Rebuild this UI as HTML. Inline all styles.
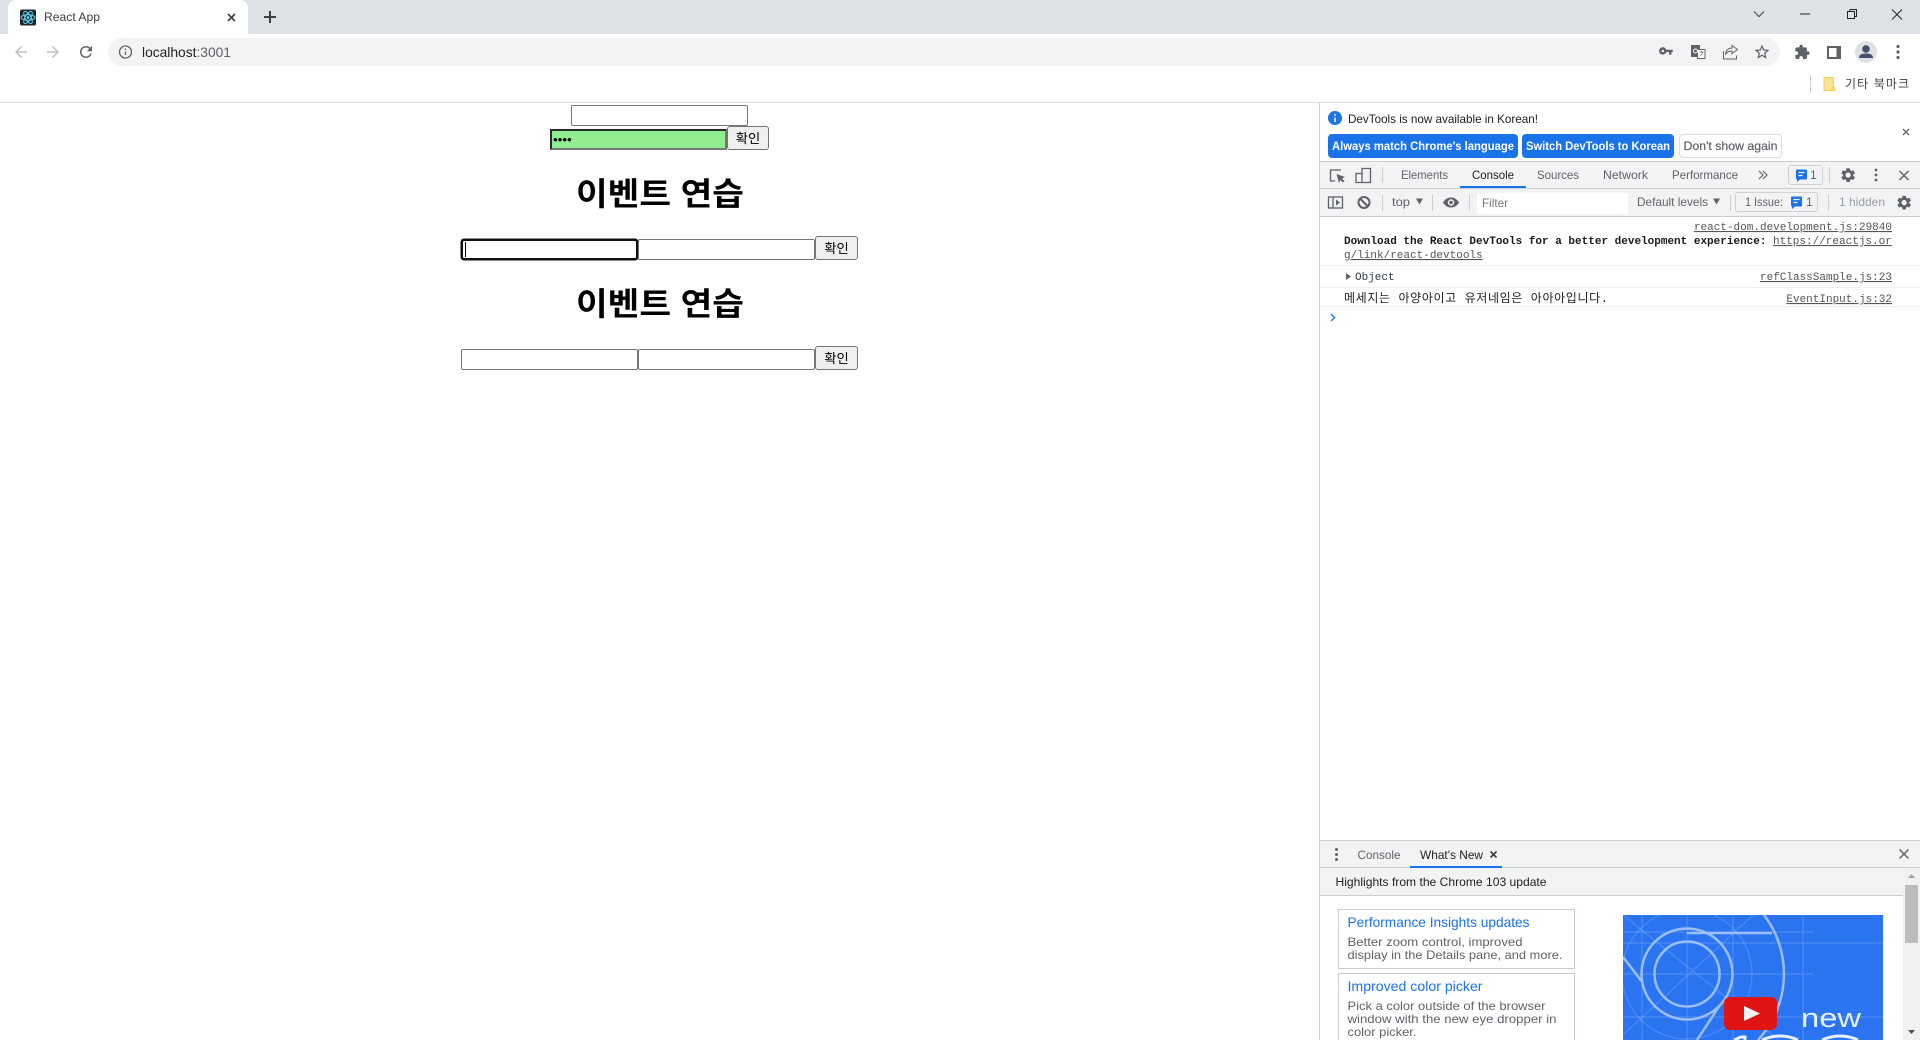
<!DOCTYPE html>
<html lang="ko"><head><meta charset="utf-8"><title>React App</title>
<style>
html,body{margin:0;padding:0;width:1920px;height:1040px;overflow:hidden;background:#fff}
#w{position:relative;width:1920px;height:1040px;overflow:hidden}
.b{position:absolute}
input,button{position:absolute;box-sizing:border-box;margin:0;padding:0;outline:none;font-family:"Liberation Sans","Noto Sans CJK KR",sans-serif}
input{border:1px solid #767676;border-radius:2px;background:#fff;height:21px;width:177px}
button{border:1px solid #767676;border-radius:3px;background:#efefef;color:#000;font-size:13.33px;height:24px;line-height:20px;width:43px;padding-top:2px}
svg{position:absolute;left:0;top:0}
text{font-family:"Liberation Sans","Noto Sans CJK KR",sans-serif;font-size:12px;fill:#5f6368}
.m{font-family:"Liberation Mono","Noto Sans CJK KR",monospace;font-size:11px}
.k{font-family:"Liberation Sans","Noto Sans CJK KR",sans-serif}
.u{text-decoration:underline}
</style></head><body><div id="w">
<div class="b" style="left:0;top:0;width:1920px;height:34px;background:#dee1e6"></div>
<div class="b" style="left:8px;top:0;width:240px;height:34px;background:#fff;border-radius:8px 8px 0 0"></div>
<div class="b" style="left:108px;top:38px;width:1672px;height:28px;background:#f1f3f4;border-radius:14px"></div>
<div class="b" style="left:0;top:102px;width:1920px;height:1px;background:#dadce0"></div>

<input style="left:571px;top:105px">
<input type="password" value="1234" style="left:550px;top:129px;background:#90ee90;border:2px solid;border-color:#2b2b2b #767676 #767676 #2b2b2b;border-radius:0;font-size:13.33px;padding-left:1px">
<button style="left:727px;top:126px;width:42px">확인</button>
<input style="left:461px;top:239px;border:2px solid #101010;border-radius:3px;box-shadow:0 0 0 .5px #101010">
<div class="b" style="left:465px;top:242px;width:1px;height:15px;background:#000"></div>
<input style="left:638px;top:239px">
<button style="left:815px;top:236px">확인</button>
<input style="left:461px;top:349px">
<input style="left:638px;top:349px">
<button style="left:815px;top:346px">확인</button>

<div class="b" style="left:1319px;top:103px;width:1px;height:937px;background:#d0d2d6"></div>
<div class="b" style="left:1320px;top:161px;width:600px;height:1px;background:#cbcdd1"></div>
<div class="b" style="left:1320px;top:162px;width:600px;height:26px;background:#f1f3f4"></div>
<div class="b" style="left:1320px;top:188px;width:600px;height:1px;background:#cbcdd1"></div>
<div class="b" style="left:1320px;top:189px;width:600px;height:27px;background:#f1f3f4"></div>
<div class="b" style="left:1320px;top:216px;width:600px;height:1px;background:#cbcdd1"></div>
<div class="b" style="left:1460px;top:186px;width:66px;height:2px;background:#1a73e8"></div>
<div class="b" style="left:1477px;top:193px;width:151px;height:21px;background:#fff"></div>
<div class="b" style="left:1328px;top:134px;width:190px;height:24px;background:#1a73e8;border-radius:4px"></div>
<div class="b" style="left:1522px;top:134px;width:152px;height:24px;background:#1a73e8;border-radius:4px"></div>
<div class="b" style="left:1679px;top:134px;width:101px;height:22px;background:#fff;border:1px solid #dadce0;border-radius:4px"></div>
<div class="b" style="left:1788px;top:165px;width:33px;height:18px;border:1px solid #cfd1d5;border-radius:3px"></div>
<div class="b" style="left:1735px;top:192px;width:81px;height:18px;border:1px solid #cfd1d5;border-radius:3px"></div>

<div class="b" style="left:1320px;top:265px;width:600px;height:1px;background:#f0f0f0"></div>
<div class="b" style="left:1320px;top:287px;width:600px;height:1px;background:#f0f0f0"></div>
<div class="b" style="left:1320px;top:306px;width:600px;height:1px;background:#f0f0f0"></div>

<div class="b" style="left:1320px;top:840px;width:600px;height:1px;background:#cbcdd1"></div>
<div class="b" style="left:1320px;top:841px;width:600px;height:26px;background:#f1f3f4"></div>
<div class="b" style="left:1320px;top:867px;width:600px;height:1px;background:#cbcdd1"></div>
<div class="b" style="left:1410px;top:866px;width:92px;height:2px;background:#1a73e8"></div>
<div class="b" style="left:1320px;top:868px;width:583px;height:27px;background:#f1f3f4"></div>
<div class="b" style="left:1320px;top:895px;width:583px;height:1px;background:#cbcdd1"></div>
<div class="b" style="left:1903px;top:868px;width:17px;height:172px;background:#f1f1f1"></div>
<div class="b" style="left:1905px;top:885px;width:13px;height:58px;background:#bdbdbd"></div>
<div class="b" style="left:1338px;top:909px;width:235px;height:58px;border:1px solid #c8ccd2"></div>
<div class="b" style="left:1338px;top:973px;width:235px;height:66px;border:1px solid #c8ccd2;border-bottom:0"></div>

<svg width="1920" height="1040" viewBox="0 0 1920 1040">
<defs>
<path id="gear" d="M19.14 12.94c.04-.3.06-.61.06-.94 0-.32-.02-.64-.07-.94l2.03-1.58c.18-.14.23-.41.12-.61l-1.92-3.32c-.12-.22-.37-.29-.59-.22l-2.39.96c-.5-.38-1.03-.7-1.62-.94l-.36-2.54c-.04-.24-.24-.41-.48-.41h-3.84c-.24 0-.43.17-.47.41l-.36 2.54c-.59.24-1.13.57-1.62.94l-2.39-.96c-.22-.08-.47 0-.59.22L2.74 8.87c-.12.21-.08.47.12.61l2.03 1.58c-.05.3-.09.63-.09.94s.02.64.07.94l-2.03 1.58c-.18.14-.23.41-.12.61l1.92 3.32c.12.22.37.29.59.22l2.39-.96c.5.38 1.03.7 1.62.94l.36 2.54c.05.24.24.41.48.41h3.84c.24 0 .44-.17.47-.41l.36-2.54c.59-.24 1.13-.56 1.62-.94l2.39.96c.22.08.47 0 .59-.22l1.92-3.32c.12-.22.07-.47-.12-.61l-2.01-1.58zM12 15.6c-1.98 0-3.6-1.62-3.6-3.6s1.62-3.6 3.6-3.6 3.6 1.62 3.6 3.6-1.62 3.6-3.6 3.6z" fill="#5f6368"/>
<path id="msg" d="M0 1a1 1 0 0 1 1-1h9a1 1 0 0 1 1 1v8a1 1 0 0 1-1 1H4l-3 2.5V10H1a1 1 0 0 1-1-1z" fill="#1a73e8"/>
</defs>

<!-- tab -->
<rect x="20" y="9.5" width="16" height="16" rx="2" fill="#20232a"/>
<g fill="none" stroke="#61dafb" stroke-width=".9"><ellipse cx="28" cy="17.5" rx="7" ry="2.8"/><ellipse cx="28" cy="17.5" rx="7" ry="2.8" transform="rotate(60 28 17.5)"/><ellipse cx="28" cy="17.5" rx="7" ry="2.8" transform="rotate(120 28 17.5)"/></g>
<circle cx="28" cy="17.5" r="1.4" fill="#61dafb"/>
<text x="44" y="21" textLength="56" lengthAdjust="spacingAndGlyphs" style="fill:#3c4043">React App</text>
<path d="M228 14l7 7M235 14l-7 7" stroke="#3c4043" stroke-width="1.6" fill="none"/>
<path d="M270 11v12M264 17h12" stroke="#3c4043" stroke-width="2" fill="none"/>
<!-- window -->
<path d="M1754 11.5l5 5 5-5" stroke="#3c4043" fill="none"/>
<path d="M1800 14h10" stroke="#202124" fill="none"/>
<path d="M1847.5 11.5h7v7h-7zM1850 11.5v-2h6.500v7h-2" stroke="#202124" fill="none"/>
<path d="M1892 9.500l10 10M1902 9.500l-10 10" stroke="#202124" fill="none"/>
<!-- nav -->
<path transform="translate(12 43) scale(.75)" fill="#bdc1c6" d="M20 11H7.830l5.590-5.590L12 4l-8 8 8 8 1.410-1.410L7.830 13H20v-2z"/>
<path transform="translate(44 43) scale(.75)" fill="#bdc1c6" d="M12 4l-1.410 1.410L16.170 11H4v2h12.170l-5.580 5.590L12 20l8-8z"/>
<path transform="translate(77 43) scale(.75)" fill="#5f6368" d="M17.650 6.350C16.200 4.900 14.210 4 12 4c-4.420 0-7.990 3.580-7.990 8s3.570 8 7.990 8c3.730 0 6.840-2.550 7.730-6h-2.080c-.82 2.330-3.040 4-5.650 4-3.310 0-6-2.690-6-6s2.690-6 6-6c1.660 0 3.140.69 4.220 1.780L13 11h7V4l-2.350 2.350z"/>
<circle cx="125.500" cy="52" r="6" fill="none" stroke="#5f6368" stroke-width="1.300"/>
<path d="M125.500 51.500v3.500M125.500 48.500v1.500" stroke="#5f6368" stroke-width="1.300"/>
<text x="142" y="57" textLength="89" lengthAdjust="spacingAndGlyphs" style="font-size:14px;fill:#5f6368"><tspan style="fill:#202124">localhost</tspan>:3001</text>
<!-- toolbar right -->
<path transform="translate(1658.500 43.500) scale(.62)" fill="#5f6368" d="M12.650 10C11.830 7.670 9.610 6 7 6c-3.310 0-6 2.690-6 6s2.690 6 6 6c2.610 0 4.830-1.670 5.650-4H17v4h4v-4h2v-4H12.650zM7 14c-1.100 0-2-.9-2-2s.9-2 2-2 2 .9 2 2-.9 2-2 2z"/>
<rect x="1691" y="45" width="9" height="12" fill="#5f6368"/><rect x="1697.500" y="49.500" width="7.500" height="9" fill="#fff" stroke="#5f6368"/>
<circle cx="1695.500" cy="51" r="2" fill="none" stroke="#fff"/><path d="M1699.500 52h4M1701.500 51v1M1700.500 56l2.500-4" stroke="#5f6368" stroke-width=".7" fill="none"/>
<path d="M1723.500 51v8h13v-3.500" fill="none" stroke="#5f6368"/><path d="M1737.500 49.500l-5.500-4v2.500c-4 0-6 2.500-6.500 6.500 1.500-2.500 3.500-3.500 6.500-3.500v2.500z" fill="none" stroke="#5f6368"/>
<path transform="translate(1753 43) scale(.75)" fill="#5f6368" d="M22 9.240l-7.190-.62L12 2 9.190 8.630 2 9.240l5.460 4.730L5.820 21 12 17.270 18.180 21l-1.630-7.030L22 9.240zM12 15.400l-3.760 2.270 1-4.280-3.320-2.880 4.380-.38L12 6.100l1.710 4.040 4.380.38-3.320 2.880 1 4.280L12 15.400z"/>
<path transform="translate(1794 44) scale(.68)" fill="#5f6368" d="M20.500 11H19V7c0-1.100-.9-2-2-2h-4V3.500C13 2.120 11.880 1 10.500 1S8 2.120 8 3.500V5H4c-1.100 0-1.990.9-1.990 2v3.800H3.500c1.490 0 2.700 1.210 2.700 2.700s-1.210 2.700-2.700 2.700H2V20c0 1.100.9 2 2 2h3.800v-1.500c0-1.490 1.210-2.700 2.700-2.700 1.490 0 2.700 1.210 2.700 2.700V22H17c1.100 0 2-.9 2-2v-4h1.500c1.380 0 2.500-1.120 2.500-2.500S21.880 11 20.500 11z"/>
<rect x="1827" y="46" width="14" height="13" fill="#5f6368"/><rect x="1829" y="48" width="7.500" height="9" fill="#fff"/>
<circle cx="1866" cy="52" r="11" fill="#dfe1e5"/><circle cx="1866" cy="49" r="3.800" fill="#43516f"/><path d="M1859 58c0-3.500 3-4.500 7-4.500s7 1 7 4.500z" fill="#43516f"/>
<g fill="#5f6368"><circle cx="1898" cy="46.500" r="1.600"/><circle cx="1898" cy="52" r="1.600"/><circle cx="1898" cy="57.500" r="1.600"/></g>
<!-- bookmark -->
<rect x="1810" y="76" width="1" height="16" fill="#cdcfd2"/>
<path d="M1824 77.500h9.500v13h-9.500z" fill="#fde293" stroke="#f6d155"/><rect x="1832" y="87" width="2.500" height="3.500" fill="#fde293" stroke="#f1c232" stroke-width=".7"/>
<text x="1845" y="88" textLength="64" lengthAdjust="spacing" class="k" style="fill:#3c4043;font-size:12px">기타 북마크</text>

<!-- page headings -->
<text x="576" y="205" textLength="168" lengthAdjust="spacingAndGlyphs" class="k" style="font-size:32px;font-weight:700;fill:#000">이벤트 연습</text>
<text x="576" y="315" textLength="168" lengthAdjust="spacingAndGlyphs" class="k" style="font-size:32px;font-weight:700;fill:#000">이벤트 연습</text>

<!-- infobar -->
<circle cx="1335" cy="118" r="7" fill="#1a73e8"/><path d="M1335 117.500v4.500M1335 114v1.800" stroke="#fff" stroke-width="1.500"/>
<text x="1348" y="123" textLength="190" lengthAdjust="spacingAndGlyphs" style="fill:#202124">DevTools is now available in Korean!</text>
<text x="1332" y="150" textLength="182" lengthAdjust="spacingAndGlyphs" style="fill:#fff;font-weight:700">Always match Chrome's language</text>
<text x="1526" y="150" textLength="144" lengthAdjust="spacingAndGlyphs" style="fill:#fff;font-weight:700">Switch DevTools to Korean</text>
<text x="1683.500" y="150" textLength="94" lengthAdjust="spacingAndGlyphs" style="fill:#5f6368;font-weight:400;stroke:#5f6368;stroke-width:.2">Don't show again</text>
<path d="M1903 129l6 6M1909 129l-6 6" stroke="#5f6368" stroke-width="1.300" fill="none"/>

<!-- tabs -->
<path d="M1341 170h-10.500v11h4.500" fill="none" stroke="#5f6368" stroke-width="1.300"/><path d="M1336.500 174l8.500 3-3 1.500 2.500 2.500-1.500 1.500-2.500-2.500-1.500 3z" fill="#5f6368"/>
<path d="M1362 173.500h-6v9h6zM1362 182.500h8.500v-14h-8.500v5" fill="none" stroke="#5f6368" stroke-width="1.300"/>
<rect x="1382" y="167" width="1" height="16" fill="#cbcdd1"/>
<text x="1401" y="179" textLength="47" lengthAdjust="spacingAndGlyphs">Elements</text>
<text x="1472" y="179" textLength="42" lengthAdjust="spacingAndGlyphs" style="fill:#202124">Console</text>
<text x="1537" y="179" textLength="42" lengthAdjust="spacingAndGlyphs">Sources</text>
<text x="1603" y="179" textLength="45" lengthAdjust="spacingAndGlyphs">Network</text>
<text x="1672" y="179" textLength="66" lengthAdjust="spacingAndGlyphs">Performance</text>
<path d="M1759 171l4 4-4 4M1763 171l4 4-4 4" fill="none" stroke="#5f6368" stroke-width="1.100"/>
<use href="#msg" transform="translate(1796 169.500)"/>
<path d="M1798.500 172.500h6M1798.500 175.500h4" stroke="#fff" stroke-width="1.200"/>
<text x="1810" y="179" style="fill:#5f6368">1</text>
<rect x="1829" y="167" width="1" height="16" fill="#cbcdd1"/>
<use href="#gear" transform="translate(1839.500 166.500) scale(.72)"/>
<g fill="#5f6368"><circle cx="1876" cy="170" r="1.400"/><circle cx="1876" cy="175" r="1.400"/><circle cx="1876" cy="180" r="1.400"/></g>
<path d="M1899.500 171l9 9M1908.500 171l-9 9" stroke="#5f6368" stroke-width="1.500" fill="none"/>

<!-- console toolbar -->
<rect x="1328.500" y="197" width="14" height="11" fill="none" stroke="#5f6368" stroke-width="1.300"/><path d="M1333 197v11" stroke="#5f6368" stroke-width="1.300"/><path d="M1336 199.500l4 3-4 3z" fill="#5f6368"/>
<circle cx="1364" cy="202.500" r="5.500" fill="none" stroke="#5f6368" stroke-width="2"/><path d="M1360 198.500l8 8" stroke="#5f6368" stroke-width="2"/>
<rect x="1382" y="195" width="1" height="16" fill="#cbcdd1"/>
<text x="1392" y="206" textLength="18" lengthAdjust="spacingAndGlyphs">top</text>
<path d="M1416 198.500h7l-3.500 6z" fill="#5f6368"/>
<rect x="1432" y="195" width="1" height="16" fill="#cbcdd1"/>
<path d="M1443 202.500c2-3.500 5-5 8-5s6 1.500 8 5c-2 3.500-5 5-8 5s-6-1.500-8-5z" fill="#5f6368"/><circle cx="1451" cy="202.500" r="3.200" fill="#f1f3f4"/><circle cx="1451" cy="202.500" r="1.800" fill="#5f6368"/>
<rect x="1469" y="195" width="1" height="16" fill="#cbcdd1"/>
<text x="1482" y="207" textLength="26" lengthAdjust="spacingAndGlyphs" style="fill:#757575">Filter</text>
<text x="1637" y="206" textLength="71" lengthAdjust="spacingAndGlyphs">Default levels</text>
<path d="M1713 198.500h7l-3.500 6z" fill="#5f6368"/>
<rect x="1730" y="195" width="1" height="16" fill="#cbcdd1"/>
<text x="1745" y="206" textLength="38" lengthAdjust="spacingAndGlyphs">1 Issue:</text>
<use href="#msg" transform="translate(1791 196.500)"/>
<path d="M1793.500 199.500h6M1793.500 202.500h4" stroke="#fff" stroke-width="1.200"/>
<text x="1806" y="206">1</text>
<rect x="1828" y="195" width="1" height="16" fill="#cbcdd1"/>
<text x="1839" y="206" textLength="46" lengthAdjust="spacingAndGlyphs" style="fill:#9aa0a6">1 hidden</text>
<use href="#gear" transform="translate(1895.500 194) scale(.72)"/>

<!-- console -->
<text x="1892" y="230" text-anchor="end" class="m u" style="fill:#555">react-dom.development.js:29840</text>
<text x="1344" y="244" class="m" style="fill:#1a1a1a;font-weight:700">Download the React DevTools for a better development experience: </text>
<text x="1773" y="244" class="m u" style="fill:#555">https://reactjs.or</text>
<text x="1344" y="258" class="m u" style="fill:#555">g/link/react-devtools</text>
<path d="M1346 273l5 3.500-5 3.500z" fill="#5f6368"/>
<text x="1355" y="280" class="m" style="fill:#303942">Object</text>
<text x="1892" y="280" text-anchor="end" class="m u" style="fill:#555">refClassSample.js:23</text>
<text x="1344" y="302" textLength="264" lengthAdjust="spacing" class="m" style="fill:#202124;font-size:12px">메세지는 아양아이고 유저네임은 아아아입니다.</text>
<text x="1892" y="302" text-anchor="end" class="m u" style="fill:#555">EventInput.js:32</text>
<path d="M1331 314l3.500 3.500-3.500 3.500" fill="none" stroke="#367cf1" stroke-width="1.500"/>

<!-- drawer -->
<g fill="#5f6368"><circle cx="1336.500" cy="849.500" r="1.500"/><circle cx="1336.500" cy="854.500" r="1.500"/><circle cx="1336.500" cy="859.500" r="1.500"/></g>
<text x="1357.500" y="859" textLength="43" lengthAdjust="spacingAndGlyphs">Console</text>
<text x="1420" y="859" textLength="63" lengthAdjust="spacingAndGlyphs" style="fill:#202124">What's New</text>
<path d="M1490.500 851.500l6 6M1496.500 851.500l-6 6" stroke="#3c4043" stroke-width="1.600" fill="none"/>
<path d="M1899.500 849.500l9 9M1908.500 849.500l-9 9" stroke="#5f6368" stroke-width="1.500" fill="none"/>
<text x="1335.500" y="886" textLength="211" lengthAdjust="spacingAndGlyphs" style="fill:#202124">Highlights from the Chrome 103 update</text>
<text x="1347.500" y="927" textLength="182" lengthAdjust="spacingAndGlyphs" style="font-size:14px;fill:#1a73e8">Performance Insights updates</text>
<text x="1347.500" y="946" textLength="175" lengthAdjust="spacingAndGlyphs" style="fill:#5f6368">Better zoom control, improved</text>
<text x="1347.500" y="959" textLength="215" lengthAdjust="spacingAndGlyphs" style="fill:#5f6368">display in the Details pane, and more.</text>
<text x="1347.500" y="991" textLength="135" lengthAdjust="spacingAndGlyphs" style="font-size:14px;fill:#1a73e8">Improved color picker</text>
<text x="1347.500" y="1010" textLength="198" lengthAdjust="spacingAndGlyphs" style="fill:#5f6368">Pick a color outside of the browser</text>
<text x="1347.500" y="1023" textLength="209" lengthAdjust="spacingAndGlyphs" style="fill:#5f6368">window with the new eye dropper in</text>
<text x="1347.500" y="1036" textLength="69" lengthAdjust="spacingAndGlyphs" style="fill:#5f6368">color picker.</text>
<path d="M1911.500 874l-3.500 4h7z" fill="#a3a3a3"/><path d="M1911.500 1034l-3.500-4h7z" fill="#505050"/>

<!-- video thumb -->
<svg x="1623" y="915" width="260" height="125" viewBox="1623 915 260 125">
<rect x="1623" y="915" width="260" height="125" fill="#2a74f2"/>
<g stroke="#fff" stroke-opacity=".16" fill="none" stroke-width="1.200">
<path d="M1642 915v125M1687 915v125M1733 915v125M1803 915v125M1623 932h190M1623 943h260M1623 974h190M1623 1017h260"/>
<path d="M1623 915l156 125M1623 1035l130-120"/>
<circle cx="1687" cy="974" r="65"/>
</g>
<g stroke="#9cbef8" fill="none" stroke-width="2.500">
<circle cx="1687" cy="974" r="32.500"/><circle cx="1687" cy="974" r="45.500"/>
<path d="M1764 915A97 97 0 0 1 1758 1040"/>
<path d="M1687 933h85M1623 957l20 26M1720 1005l-23 35"/>
</g>
<rect x="1724" y="997" width="53" height="33" rx="6" fill="#e01315"/>
<path d="M1744 1006l16 7.500-16 7.500z" fill="#f4f4f4"/>
<text x="1801" y="1027" textLength="60" lengthAdjust="spacingAndGlyphs" style="font-size:27px;fill:#e8f0fe">new</text>
<path d="M1734 1040l7-3h4v3M1762 1040q18-8 36 0M1822 1040q18-8 36 0" fill="none" stroke="#e8f0fe" stroke-width="3"/>
</svg>
</svg>
</div></body></html>
